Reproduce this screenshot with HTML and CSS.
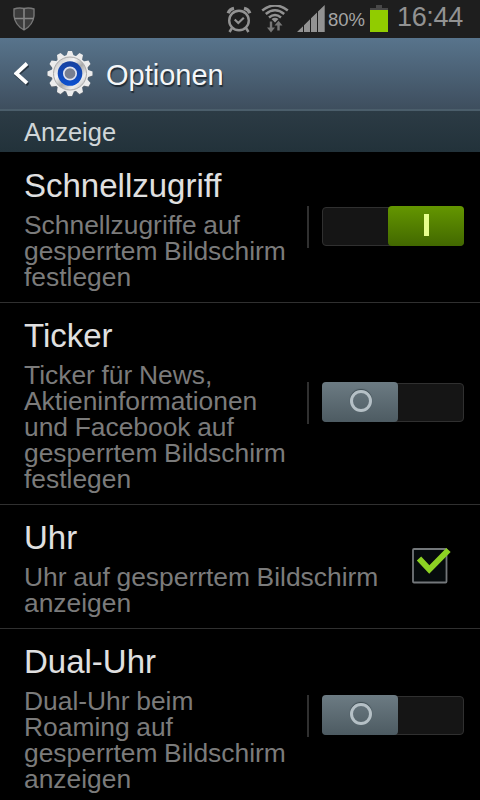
FILE: index.html
```html
<!DOCTYPE html>
<html lang="de">
<head>
    <meta charset="UTF-8">
    <meta name="viewport" content="width=device-width, initial-scale=1.0">
    <title>Optionen</title>
    <link rel="stylesheet" href="styles.css">
</head>
<body>

    <div class="statusbar">
        <svg class="shield" width="22" height="24" viewBox="0 0 22 24">
            <path d="M1 2Q6 .3 11 1.5Q16 .3 21 2V9Q20 18 11 23Q2 18 1 9Z" fill="#3c3c3c" stroke="#777" stroke-width="1.4"/>
            <path d="M11 1.5V23M1.5 11.5H20.5" stroke="#858585" stroke-width="1.6"/>
        </svg>
        <div class="status-icons">
            <svg width="26" height="27" viewBox="0 0 26 27" fill="none" stroke="#929292">
                <circle cx="13" cy="14.5" r="9.8" stroke-width="2.4"/>
                <path d="M8.7 13.5L12.3 17L17.8 11.8" stroke-width="2.2"/>
                <path d="M2.2 7.3Q3.5 3.2 8 2.3M23.8 7.3Q22.5 3.2 18 2.3" stroke-width="3.3"/>
                <path d="M6 22L3.5 26M20 22L22.5 26" stroke-width="2.5"/>
            </svg>
            <svg class="wifi" width="28" height="28" viewBox="0 0 28 28" fill="none" stroke="#929292" stroke-width="2.5">
                <path d="M1.2 5.5Q14-4.5 26.8 5.5M4.8 9Q14 1.500 23.200 9M8 12.500Q14 7.500 20 12.500"/>
                <path d="M10.500 14Q14 11.500 17.500 14L14 17.500Z" fill="#929292" stroke="none"/>
                <path d="M10 16.500V24M17.500 25.500V19" stroke="#777" stroke-width="2.400"/>
                <path d="M6 22.500H14L10 27.500ZM13.500 20.500H21.500L17.500 15.800Z" fill="#777" stroke="none"/>
            </svg>
            <svg class="signal" width="28" height="28" viewBox="0 0 28 28">
                <path d="M0 27L6 21.200V27ZM7 27V20.200L13 14.300V27ZM14 27V13.300L20 7.500V27ZM21 27V6.500L27.700 0V27Z" fill="#929292"/>
            </svg>
            <span class="percent">80%</span>
            <svg class="battery" width="18" height="28" viewBox="0 0 18 28">
                <path d="M6 0H12V3H18V5H0V3H6Z" fill="#484848"/>
                <rect y="5" width="18" height="22" fill="#91cc00"/>
            </svg>
            <span class="clock">16:44</span>
        </div>
    </div>

    <div class="header">
        <svg class="back" width="15" height="24" viewBox="0 0 15 24">
            <path d="M13.5 2L2 12L13.5 21.5" transform="translate(.8 1.2)" fill="none" stroke="#273440" stroke-width="3.5"/>
            <path d="M13 1.5L2.2 11.5L13 21.2" fill="none" stroke="#fff" stroke-width="3.8"/>
        </svg>
        <svg class="gear" width="46" height="48" viewBox="0 0 46 48">
            <defs>
                <linearGradient id="metal" x1="0" y1="0" x2="1" y2="1">
                    <stop offset="0" stop-color="#b5b5b5"/>
                    <stop offset=".35" stop-color="#f5f5f5"/>
                    <stop offset=".55" stop-color="#aaa"/>
                    <stop offset=".75" stop-color="#eee"/>
                    <stop offset="1" stop-color="#a5a5a5"/>
                </linearGradient>
                <linearGradient id="blue" x1="0" y1="0" x2="0" y2="1">
                    <stop offset="0" stop-color="#17419f"/>
                    <stop offset="1" stop-color="#0b50d0"/>
                </linearGradient>
                <g id="teeth">
                    <path id="tooth" d="M19.3 6L21 1H25L26.7 6V42L25 46H21L19.3 42Z"/>
                    <use href="#tooth" transform="rotate(30 23 23.5)"/>
                    <use href="#tooth" transform="rotate(60 23 23.5)"/>
                    <use href="#tooth" transform="rotate(90 23 23.5)"/>
                    <use href="#tooth" transform="rotate(120 23 23.5)"/>
                    <use href="#tooth" transform="rotate(150 23 23.5)"/>
                    <circle cx="23" cy="23.5" r="18.5"/>
                </g>
            </defs>
            <use href="#teeth" y="1" fill="#59636e"/>
            <use href="#teeth" fill="#ececec"/>
            <circle cx="23" cy="23.5" r="16.5" fill="url(#metal)" stroke="#aaa"/>
            <circle cx="23" cy="23.5" r="12.3" fill="url(#blue)"/>
            <circle cx="23" cy="23.5" r="6.2" fill="#777f91" stroke="#dfe3ef" stroke-width="1.7"/>
        </svg>
        <h1>Optionen</h1>
    </div>

    <div class="section">Anzeige</div>

    <div class="list">
        <div class="row">
            <div class="text">
                <h2>Schnellzugriff</h2>
                <p>Schnellzugriffe auf<br>gesperrtem Bildschirm<br>festlegen</p>
            </div>
            <div class="control">
                <div class="switch on"><div class="thumb"><span class="bar"></span></div></div>
            </div>
        </div>
        <div class="row">
            <div class="text">
                <h2>Ticker</h2>
                <p>Ticker für News,<br>Aktieninformationen<br>und Facebook auf<br>gesperrtem Bildschirm<br>festlegen</p>
            </div>
            <div class="control">
                <div class="switch"><div class="thumb"><span class="ring"></span></div></div>
            </div>
        </div>
        <div class="row">
            <div class="text">
                <h2>Uhr</h2>
                <p>Uhr auf gesperrtem Bildschirm<br>anzeigen</p>
            </div>
            <svg class="checkbox" width="40" height="38" viewBox="0 0 40 38">
                <rect x="1" y="2" width="33.5" height="33.5" rx="1" fill="#060b0d" stroke="#73777a" stroke-width="1.8"/>
                <path d="M7 11.5L17.3 22.5L36.5 3" fill="none" stroke="#8dd223" stroke-width="6"/>
            </svg>
        </div>
        <div class="row">
            <div class="text">
                <h2>Dual-Uhr</h2>
                <p>Dual-Uhr beim<br>Roaming auf<br>gesperrtem Bildschirm<br>anzeigen</p>
            </div>
            <div class="control">
                <div class="switch"><div class="thumb"><span class="ring"></span></div></div>
            </div>
        </div>
    </div>

</body>
</html>
```
FILE: styles.css
```css
* {
    box-sizing: border-box;
}
body {
    font-family: "Liberation Sans", Arial, sans-serif;
    background-color: #000;
    margin: 0;
    height: 800px;
    overflow: hidden;
}
h1, h2, p {
    margin: 0;
    font-weight: normal;
}
.statusbar {
    height: 38px;
    display: flex;
    justify-content: space-between;
    background-color: #1e1e1e;
    color: #929292;
    padding: 0 17px 0 13px;
}
.shield {
    margin-top: 7px;
}
.status-icons {
    display: flex;
    align-items: flex-start;
    padding-top: 5px;
}
.status-icons svg:first-child {
    margin-top: 1px;
}
.wifi {
    margin-left: 9px;
}
.signal {
    margin-left: 8px;
}
.percent {
    width: 37px;
    margin-left: 3px;
    font-size: 18.5px;
    line-height: 30px;
    color: #a5a5a5;
}
.battery {
    margin-left: 5px;
}
.clock {
    margin-left: 9px;
    font-size: 27px;
    line-height: 24px;
    letter-spacing: -0.3px;
}
.header {
    height: 73px;
    display: flex;
    align-items: center;
    padding: 0 14px;
    background: linear-gradient(#58748c, #3e4e5e);
    border-bottom: 2px solid #4b5e6b;
}
.gear {
    margin: 0 13px 0 18px;
}
.header h1 {
    font-size: 29px;
    line-height: 34px;
    padding-top: 3px;
    color: #f4f6f8;
    text-shadow: 1px 2px 1px #202b35;
}
.section {
    height: 41px;
    padding-left: 24px;
    font-size: 25.5px;
    line-height: 43px;
    color: #d0d6d8;
    background: linear-gradient(#2c3b45, #22323a);
}
.list {
    padding-top: 1px;
}
.row {
    display: flex;
    justify-content: space-between;
    align-items: center;
    padding: 0 16px 0 24px;
    border-bottom: 1px solid #303030;
}
.text {
    padding: 13px 0 12px;
    white-space: nowrap;
}
.text h2 {
    font-size: 33px;
    line-height: 40px;
    color: #e0e0e0;
}
.text p {
    margin-top: 6px;
    font-size: 26.4px;
    line-height: 26px;
    word-spacing: -0.7px;
    color: #7b7b7b;
}
.control {
    width: 157px;
    height: 42px;
    margin-bottom: 1px;
    padding-left: 13px;
    border-left: 2px solid #303030;
}
.switch {
    width: 142px;
    height: 39px;
    display: flex;
    margin-top: 1px;
    background-color: #151515;
    border: 1px solid #303030;
    border-radius: 4px;
}
.switch.on {
    justify-content: flex-end;
}
.thumb {
    width: 76px;
    height: 40px;
    margin: -2px -1px;
    display: flex;
    justify-content: center;
    align-items: center;
    background: linear-gradient(#6c7b83, #4d5b62);
    border-radius: 4px;
}
.on .thumb {
    background: linear-gradient(#649600, #426800);
}
.bar {
    width: 5px;
    height: 22px;
    margin-bottom: 2px;
    background-color: #e7ff8d;
}
.ring {
    width: 22px;
    height: 22px;
    margin: 0 0 3px 1px;
    border: 3px solid #b5c0c6;
    border-radius: 50%;
    box-shadow: 0 -1px 1px #3c4a50;
}
.checkbox {
    margin: 0 12px 2px 0;
}
```
